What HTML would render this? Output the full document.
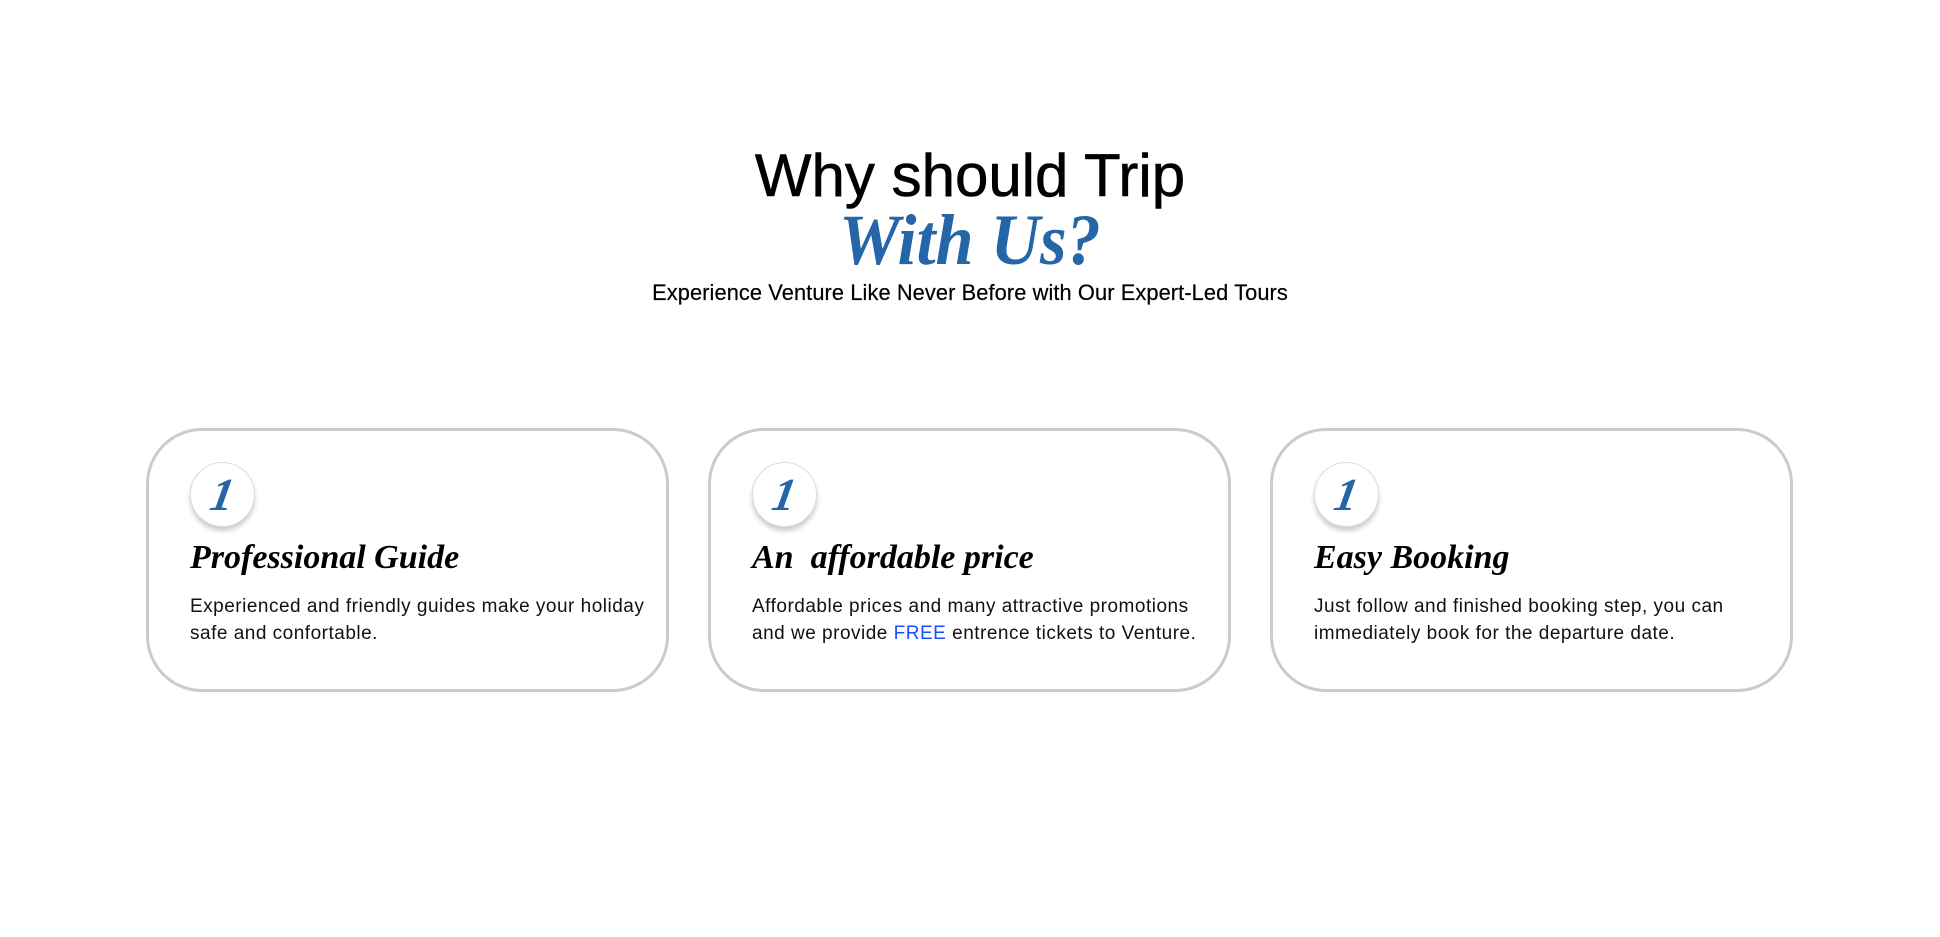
<!DOCTYPE html>
<html><head><meta charset="utf-8"><style>
body{margin:0;width:1940px;height:937px;background:#fff;position:relative;overflow:hidden;font-family:"Liberation Sans",sans-serif;}
.t1{position:absolute;left:0;width:1940px;top:140px;text-align:center;font-size:60px;color:#000;line-height:72px;-webkit-text-stroke:0.6px #000;}
.t2{position:absolute;left:0;width:1940px;top:200px;text-align:center;font-family:"Liberation Serif",serif;font-style:italic;font-weight:bold;font-size:72px;color:#2566a8;line-height:80px;transform:scaleX(0.95);}
.t3{position:absolute;left:0;width:1940px;top:279px;text-align:center;font-size:21.8px;color:#000;line-height:28px;letter-spacing:0.1px;-webkit-text-stroke:0.2px #000;}
.card{position:absolute;top:428px;width:517px;height:258px;border:3px solid #cbcbcb;border-radius:56px;}
.num{position:absolute;left:41px;top:31px;width:63px;height:63px;border-radius:50%;border:1px solid #ddd;box-shadow:0 4px 5px rgba(0,0,0,.2);background:#fff;font-family:"Liberation Serif",serif;font-style:italic;font-weight:bold;color:#2566a8;font-size:46px;text-align:center;line-height:63px;}
.num span{display:inline-block;transform:skewX(-10deg);}
.h{position:absolute;left:41px;top:108px;font-family:"Liberation Serif",serif;font-style:italic;font-weight:bold;font-size:34px;color:#000;white-space:pre;}
.p{position:absolute;left:41px;top:162px;white-space:nowrap;font-size:19px;line-height:27px;color:#111;letter-spacing:0.5px;}
.p b{color:#1a4fff;font-weight:normal;}
</style></head><body>
<div class="t1">Why should Trip</div>
<div class="t2">With Us?</div>
<div class="t3">Experience Venture Like Never Before with Our Expert-Led Tours</div>
<div class="card" style="left:146px"><div class="num"><span>1</span></div><div class="h">Professional Guide</div><div class="p">Experienced and friendly guides make your holiday<br>safe and confortable.</div></div>
<div class="card" style="left:708px"><div class="num"><span>1</span></div><div class="h">An  affordable price</div><div class="p">Affordable prices and many attractive promotions<br>and we provide <b>FREE</b> entrence tickets to Venture.</div></div>
<div class="card" style="left:1270px"><div class="num"><span>1</span></div><div class="h">Easy Booking</div><div class="p">Just follow and finished booking step, you can<br>immediately book for the departure date.</div></div>
</body></html>
